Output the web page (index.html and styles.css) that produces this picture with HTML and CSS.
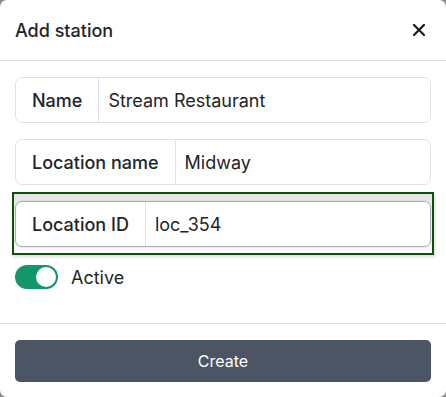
FILE: index.html
```html
<!DOCTYPE html>
<html lang="en">
<head>
  <meta charset="UTF-8">
  <title>Add station</title>
  <link rel="stylesheet" href="styles.css">
</head>
<body>

  <div class="modal">
    <!-- Header -->
    <div class="modal-header">
      <h2 class="modal-title">Add station</h2>
      <button class="close" type="button" aria-label="Close">
        <svg width="12" height="12" viewBox="0 0 12 12">
          <path d="M1 1L11 11M11 1L1 11" stroke="#1a1a1a" stroke-width="2.2" stroke-linecap="square"/>
        </svg>
      </button>
    </div>

    <div class="modal-body">
      <div class="input-group">
        <span class="group-label">Name</span>
        <input class="group-input" type="text" value="Stream Restaurant">
      </div>
      <div class="input-group">
        <span class="group-label">Location name</span>
        <input class="group-input" type="text" value="Midway">
      </div>
      <div class="focus-wrap">
        <div class="input-group focused">
          <span class="group-label">Location ID</span>
          <input class="group-input" type="text" value="loc_354">
        </div>
      </div>
      <label class="switch-row">
        <span class="switch"><span class="knob"></span></span>
        <span>Active</span>
      </label>
    </div>

    <div class="modal-footer">
      <button class="btn-create" type="button">Create</button>
    </div>
  </div>

</body>
</html>
```

FILE: styles.css
```css
html, body { height: 100%; }
body {
  margin: 0;
  background: #8c8c8c;
  font-family: Inter, "Noto Sans", sans-serif;
  color: #212529;
}
.modal {
  height: 397px;
  background: #fff;
  border-radius: 7px;
  overflow: hidden;
  display: flex;
  flex-direction: column;
}
.modal-header {
  height: 61px;
  box-sizing: border-box;
  padding: 0 15px 0 15px;
  border-bottom: 1px solid #dee2e6;
  display: flex;
  align-items: center;
  justify-content: space-between;
}
.modal-title {
  margin: 0;
  font-size: 18px;
  font-weight: 500;
}
.close {
  border: none;
  background: none;
  padding: 0;
  margin-right: 6px;
  width: 12px;
  height: 12px;
  display: flex;
}
.modal-body {
  padding: 16px 15px 0 15px;
  display: flex;
  flex-direction: column;
  height: 246px;
}
.input-group {
  display: flex;
  border: 1px solid #dee2e6;
  border-radius: 7px;
  height: 46px;
  box-sizing: border-box;
  margin-bottom: 16px;
  overflow: hidden;
  background: #fff;
}
.group-label {
  padding: 0 16px;
  display: flex;
  align-items: center;
  font-size: 18px;
  font-weight: 500;
  border-right: 1px solid #dee2e6;
}
.group-input {
  flex: 1;
  border: none;
  padding: 0 9px;
  font-family: inherit;
  font-size: 18px;
  color: #212529;
  outline: none;
  min-width: 0;
}
.focus-wrap {
  margin: -9px -3px 10px -3px;
  border: 2px solid #0b530b;
  padding: 7px 1px 6px 1px;
  background: linear-gradient(#e4e4e4, #fafafa 40%);
  box-shadow: 1px 2px 3px rgba(0, 0, 0, 0.15);
}
.input-group.focused {
  margin-bottom: 0;
  border-color: #a9adbc;
  box-shadow: 0 0 2px rgba(0, 0, 0, 0.2);
}
.switch-row {
  display: flex;
  align-items: center;
  gap: 13px;
  font-size: 18px;
}
.switch {
  width: 43px;
  height: 24px;
  border-radius: 12px;
  background: #14966b;
  position: relative;
}
.knob {
  position: absolute;
  right: 2px;
  top: 2px;
  width: 20px;
  height: 20px;
  border-radius: 50%;
  background: #fff;
}
.modal-footer {
  border-top: 1px solid #dee2e6;
  padding: 16px 15px 15px 15px;
}
.btn-create {
  width: 100%;
  height: 42px;
  border: none;
  border-radius: 5px;
  background: #4b5563;
  color: #fff;
  font-family: inherit;
  font-size: 16px;
}
```
